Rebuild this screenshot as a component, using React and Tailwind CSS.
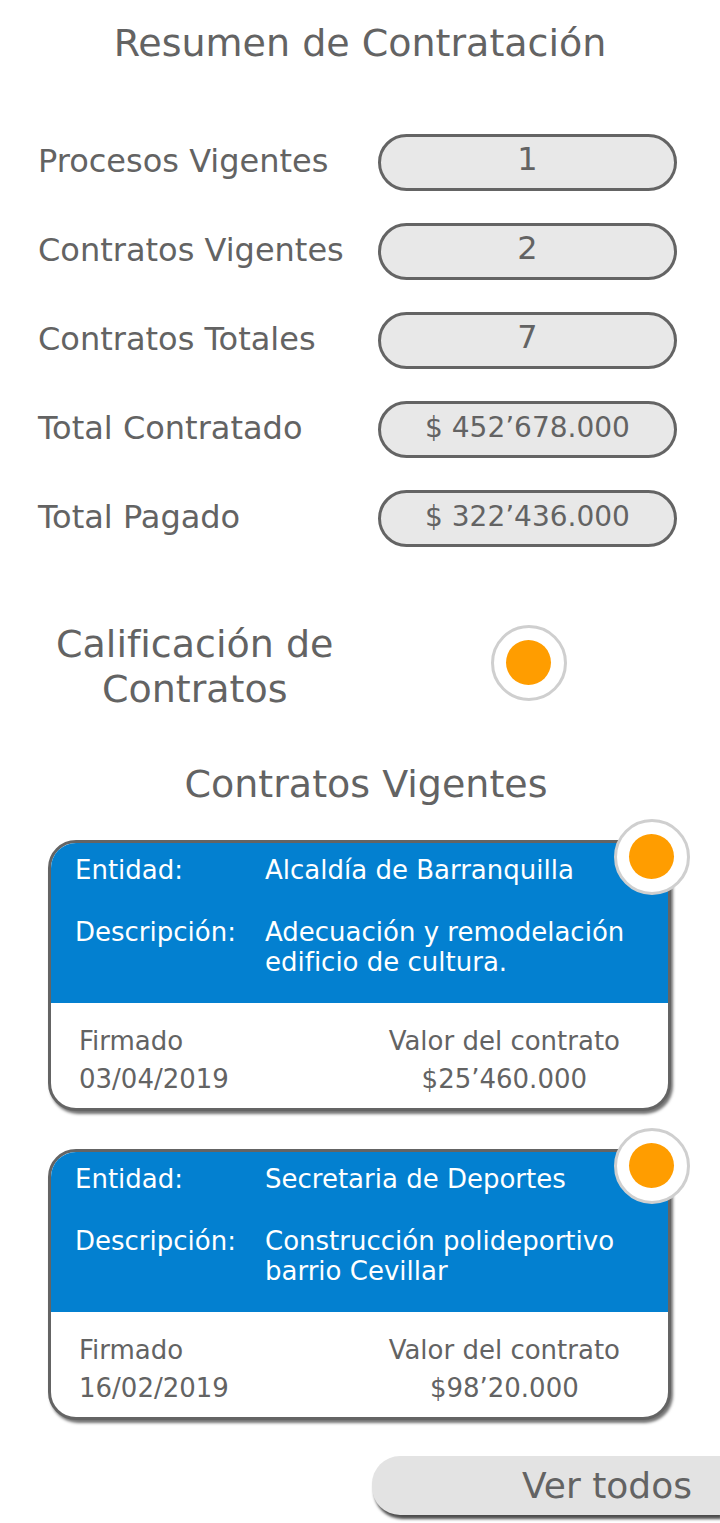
const summary = [
  { label: 'Procesos Vigentes', value: '1', size: 'text-[32px] pb-2' },
  { label: 'Contratos Vigentes', value: '2', size: 'text-[32px] pb-2' },
  { label: 'Contratos Totales', value: '7', size: 'text-[32px] pb-2' },
  { label: 'Total Contratado', value: '$ 452’678.000', size: 'text-[28px] pb-1' },
  { label: 'Total Pagado', value: '$ 322’436.000', size: 'text-[28px] pb-1' },
];

const contracts = [
  {
    entity: 'Alcaldía de Barranquilla',
    description: ['Adecuación y remodelación', 'edificio de cultura.'],
    signed: '03/04/2019',
    amount: '$25’460.000',
  },
  {
    entity: 'Secretaria de Deportes',
    description: ['Construcción polideportivo', 'barrio Cevillar'],
    signed: '16/02/2019',
    amount: '$98’20.000',
  },
];

function Status({ className = '' }) {
  return (
    <span
      className={`flex size-[76px] items-center justify-center rounded-full border-3 border-[#cfcfcf] bg-white pr-px pb-px ${className}`}
    >
      <span className="size-[45px] rounded-full bg-[#ff9d00]" />
    </span>
  );
}

function ContractCard({ contract }) {
  return (
    <article className="relative rounded-[28px] border-3 border-[#646464] bg-white text-[26px] leading-[30px] shadow-[2px_3px_3px_rgba(0,0,0,0.55)]">
      <dl className="grid h-[160px] grid-cols-[190px_1fr] content-start gap-y-8 whitespace-nowrap rounded-t-[25px] bg-[#0380d0] pt-3 pl-6 text-white">
        <dt>Entidad:</dt>
        <dd>{contract.entity}</dd>
        <dt>Descripción:</dt>
        <dd>
          {contract.description.map((line) => (
            <span key={line} className="block">{line}</span>
          ))}
        </dd>
      </dl>
      <dl className="flex justify-between whitespace-nowrap pt-[19px] pr-12 pb-[10px] pl-7 leading-[38px]">
        <div>
          <dt>Firmado</dt>
          <dd>{contract.signed}</dd>
        </div>
        <div className="text-center">
          <dt>Valor del contrato</dt>
          <dd>{contract.amount}</dd>
        </div>
      </dl>
      <Status className="absolute -top-6 -right-[22px]" />
    </article>
  );
}

export default function App() {
  return (
    <main className="overflow-hidden bg-white pb-2 font-['Verdana','DejaVu_Sans',sans-serif] text-[#636363] [font-variant-ligatures:none]">
      <h1 className="pt-5 text-center text-[38px] leading-[46px]">Resumen de Contratación</h1>

      <dl className="mt-[68px] flex flex-col gap-8 pr-[43px] pl-[38px]">
        {summary.map((item) => (
          <div key={item.label} className="flex items-center justify-between whitespace-nowrap">
            <dt className="pb-1 text-[32px] leading-10">{item.label}</dt>
            <dd
              className={`flex h-[57px] w-[299px] items-center justify-center rounded-full border-3 border-[#646464] bg-[#e8e8e8] leading-10 ${item.size}`}
            >
              {item.value}
            </dd>
          </div>
        ))}
      </dl>

      <section className="mt-[75px] flex items-start justify-between pr-[153px] pl-14">
        <h2 className="text-center text-[38px] leading-[45px]">
          Calificación de
          <br />
          Contratos
        </h2>
        <Status className="mt-[3px]" />
      </section>

      <section className="pt-[49px]">
        <h2 className="pl-3 text-center text-[38px] leading-[46px]">Contratos Vigentes</h2>
        <div className="mt-[33px] flex flex-col gap-[38px] pr-[49px] pl-12">
          {contracts.map((contract) => (
            <ContractCard key={contract.signed} contract={contract} />
          ))}
        </div>
      </section>

      <div className="mt-9 flex justify-end">
        <button
          type="button"
          className="h-[59px] w-[348px] rounded-l-[28px] bg-[#e3e3e3] pr-7 text-right text-[36px] leading-[44px] shadow-[2px_4px_3px_rgba(0,0,0,0.7)]"
        >
          Ver todos
        </button>
      </div>
    </main>
  );
}
